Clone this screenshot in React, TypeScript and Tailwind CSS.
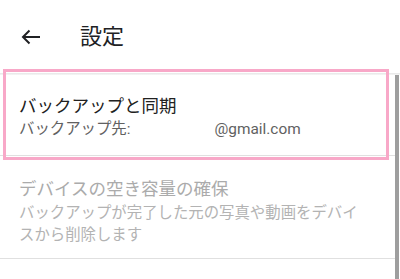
import React from "react";

export default function App() {
  const font = { fontFamily: 'Roboto, "Noto Sans CJK JP", sans-serif' };
  return (
    <div className="relative w-[400px] h-[279px] overflow-hidden bg-white" style={font}>
      <div className="h-[73px] flex items-center">
        <svg className="ml-[21px]" width="20" height="16" viewBox="0 0 20 16" fill="none">
          <path d="M19 8H2.5M8.5 1.5L2 8l6.5 6.5" stroke="#202124" strokeWidth="2" />
        </svg>
        <span className="ml-[39px] text-[22px] leading-[30px] text-[#202124]">設定</span>
      </div>
      <div className="h-[2px] bg-gradient-to-b from-[#e6e6e6] to-[#f7f7f7]" />
      <div className="flex">
        <div className="w-[395px]">
          <div className="pl-[19px] pt-[19px] pb-[15px]">
            <div className="text-[17.5px] leading-[24px] text-[#212121]">バックアップと同期</div>
            <div className="text-[15.4px] leading-[21px] mt-[1px] text-[#616161]">
              バックアップ先:<span className="inline-block w-[84px]" />@gmail.com
            </div>
          </div>
          <div className="h-[1px] bg-[#e0e0e0]" />
          <div className="pl-[19px] pr-[24px] pt-[21px] pb-[12px]">
            <div className="text-[17.5px] leading-[24px] text-[#ababab]">デバイスの空き容量の確保</div>
            <div className="text-[15.4px] leading-[21.5px] mt-[2px] text-[#b3b3b3]">
              バックアップが完了した元の写真や動画をデバイスから削除します
            </div>
          </div>
          <div className="h-[1px] bg-[#e0e0e0]" />
        </div>
        <div className="w-[5px]">
          <div className="w-[4px] h-[220px] bg-[#9e9e9e]" />
        </div>
      </div>
      <div className="absolute left-[3px] top-[69px] w-[386px] h-[91px] border-[3px] border-[#f8a8c8]" />
    </div>
  );
}
